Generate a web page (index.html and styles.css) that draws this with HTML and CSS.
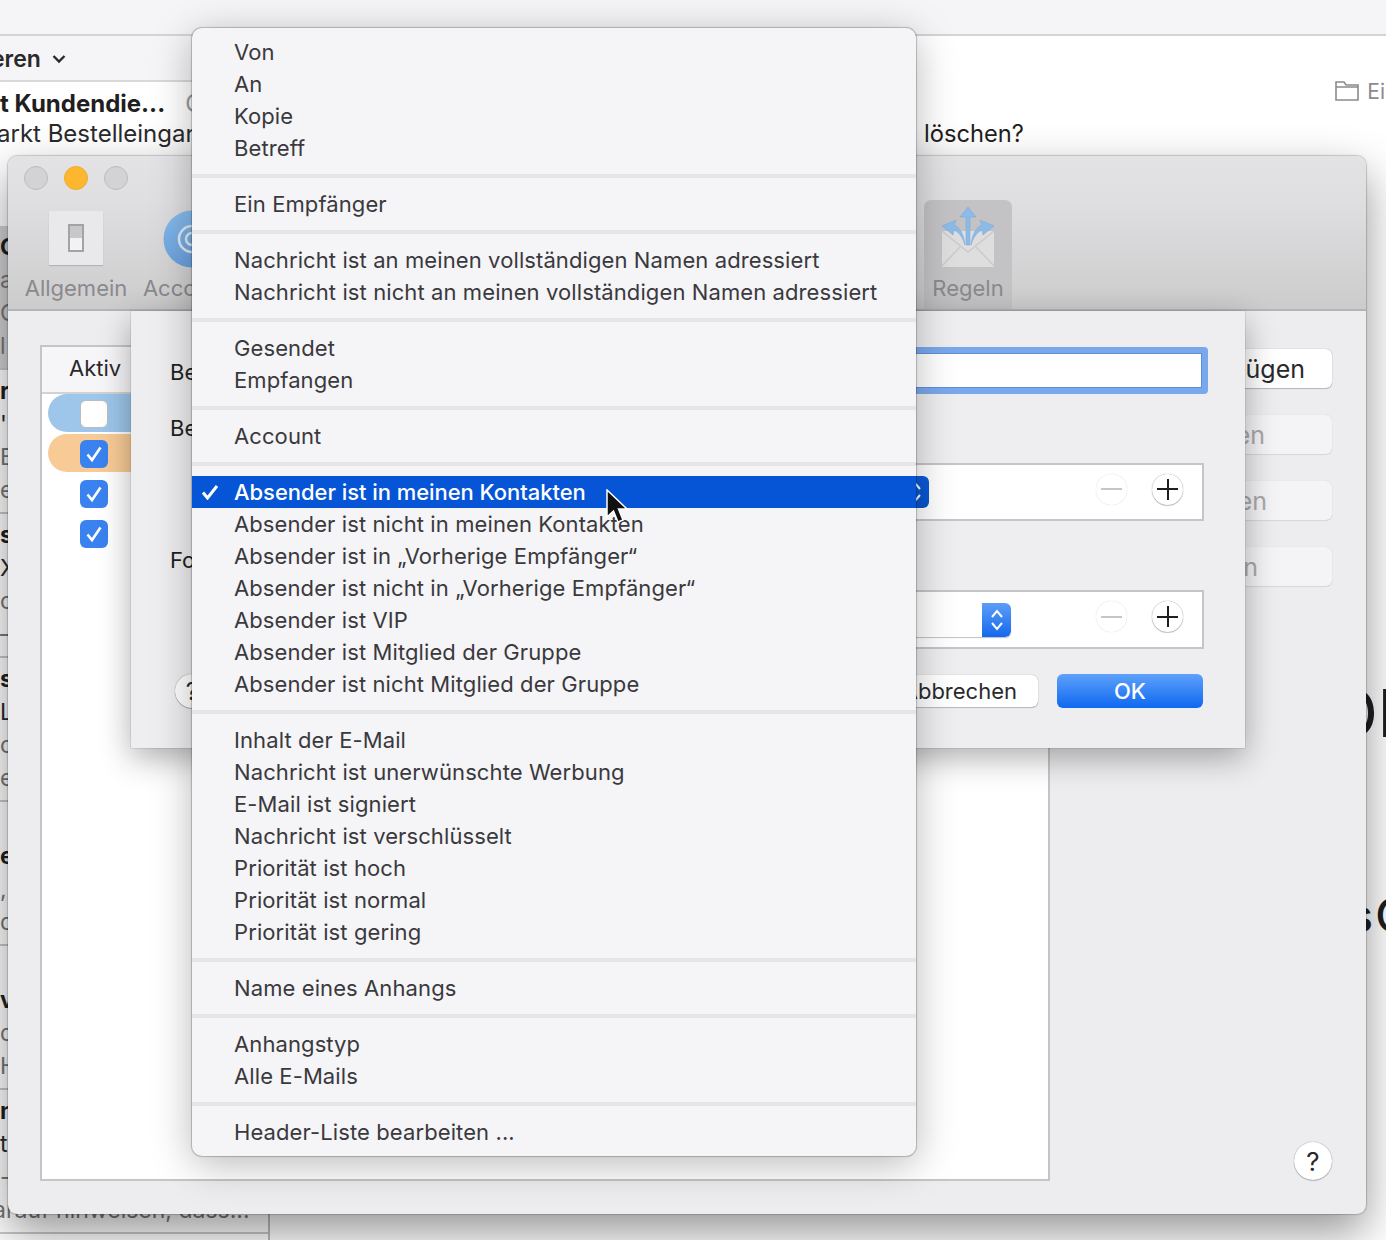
FILE: index.html
```html
<!DOCTYPE html>
<html lang="de">
<head>
<meta charset="utf-8">
<title>Mail Regeln</title>
<link rel="stylesheet" href="styles.css">
</head>
<body>
<div class="app">
  <header class="topbar"></header>
  <div class="main">
    <aside class="list">
      <div class="list-head"><span class="sort">eren</span>
        <svg class="chev" width="14" height="10" viewBox="0 0 14 10"><path d="M1.500 2 7 7.500 12.500 2" fill="none" stroke="#2a292c" stroke-width="2.400"/></svg>
      </div>
      <div class="mail selected">
        <div class="mail-top"><b>t Kundendie...</b><span class="date">G</span></div>
        <p class="dark clip">arkt Bestelleingang</p>
      </div>
      <div class="mail shaded"><b>C</b><p class="grey">a</p><p class="grey">C</p><p class="grey">l</p></div>
      <div class="mail"><b>r</b><p class="dark">'</p><p class="grey">E</p><p class="grey">e</p></div>
      <div class="mail"><b>s</b><p class="dark">X</p><p class="grey">o</p><p class="grey">–</p></div>
      <div class="mail"><b>s</b><p class="dark">L</p><p class="grey">o</p><p class="grey">e</p></div>
      <div class="mail"><b>&nbsp;</b><b>e</b><p class="grey">,</p><p class="grey">d</p></div>
      <div class="mail"><b>&nbsp;</b><b>v</b><p class="grey">d</p><p class="grey">H</p></div>
      <div class="mail"><b>n</b><p class="dark">t</p><p class="grey">-</p><p class="grey clip-more">arauf hinweisen, dass...</p></div>
    </aside>
    <section class="reader">
      <div class="folder-line">
        <svg width="24" height="20" viewBox="0 0 24 20"><path d="M1 19V1h8l2 3h12v15zM1 6h22" fill="none" stroke="#8b8a8e" stroke-width="1.600"/></svg>
        <span>Ei</span>
      </div>
      <p class="subject">löschen?</p>
      <p class="big big-one">Ol</p>
      <p class="big big-two">s C</p>
    </section>
  </div>
</div>

<div class="prefs">
  <div class="titlebar">
    <i class="light"></i><i class="light yellow"></i><i class="light"></i>
  </div>
  <nav class="tools">
    <div class="tool">
      <span class="general-icon"><span class="switch"></span></span>
      <span>Allgemein</span>
    </div>
    <div class="tool tool-acc">
      <svg class="acc-icon" width="58" height="58" viewBox="0 0 58 58"><defs><linearGradient id="acg" x1="0" y1="0" x2="0" y2="1"><stop offset="0" stop-color="#86bdec"/><stop offset="1" stop-color="#6ba0de"/></linearGradient></defs><circle cx="29" cy="29" r="28.500" fill="url(#acg)"/><circle cx="29" cy="29" r="13" fill="none" stroke="#dfe9f5" stroke-width="2.500"/><circle cx="29" cy="29" r="6" fill="none" stroke="#dfe9f5" stroke-width="2.500"/></svg>
      <span>Accounts</span>
    </div>
    <div class="tool tool-rules">
      <svg width="56" height="62" viewBox="0 0 56 62"><rect x="2" y="26" width="52" height="36" fill="#dededf"/><path d="M2 61 20 42M54 61 36 42M2 26l26 21 26-21" fill="none" stroke="#cbcacc" stroke-width="1.500"/><path d="M26 40V12h-6l8-10 8 10h-6v28zM25 40c-1-10-5-18-11-20l2-5-14 6 11 9 1-5c5 2 9 8 11 15zM31 40c1-10 5-18 11-20l-2-5 14 6-11 9-1-5c-5 2-9 8-11 15z" fill="#8dbbe8" stroke="#77a5d6" stroke-width=".500"/></svg>
      <span>Regeln</span>
    </div>
  </nav>
  <div class="pane">
    <div class="table">
      <div class="thead">Aktiv</div>
      <div class="trow pill-blue"><span class="cb"></span></div>
      <div class="trow pill-orange"><span class="cb on"><svg width="20" height="20" viewBox="0 0 20 20"><path d="M3.500 10.500 8 16 16.500 3.500" fill="none" stroke="#fff" stroke-width="2.600"/></svg></span></div>
      <div class="trow"><span class="cb on"><svg width="20" height="20" viewBox="0 0 20 20"><path d="M3.500 10.500 8 16 16.500 3.500" fill="none" stroke="#fff" stroke-width="2.600"/></svg></span></div>
      <div class="trow"><span class="cb on"><svg width="20" height="20" viewBox="0 0 20 20"><path d="M3.500 10.500 8 16 16.500 3.500" fill="none" stroke="#fff" stroke-width="2.600"/></svg></span></div>
    </div>
    <div class="side">
      <span class="btn">ügen</span>
      <span class="btn off off-a">en</span>
      <span class="btn off off-b">en</span>
      <span class="btn off off-c">n</span>
      <span class="round help">?</span>
    </div>
  </div>

  <div class="sheet">
    <div class="sheet-row">
      <label class="lbl">Be</label>
      <div class="focus"><div class="focus-inner"></div></div>
    </div>
    <label class="lbl lbl-two">Be</label>
    <div class="box">
      <div class="select sel-one"><span class="stepper dark-step"><svg width="14" height="26" viewBox="0 0 14 26"><path d="M2 10 7 4l5 6M2 16l5 6 5-6" fill="none" stroke="#fff" stroke-width="2"/></svg></span></div>
      <span class="round small minus"><i></i></span>
      <span class="round small plus"><i></i><i class="v"></i></span>
    </div>
    <label class="lbl lbl-three">Fo</label>
    <div class="box box-two">
      <div class="select sel-two"><span class="stepper"><svg width="14" height="26" viewBox="0 0 14 26"><path d="M2 10 7 4l5 6M2 16l5 6 5-6" fill="none" stroke="#fff" stroke-width="2"/></svg></span></div>
      <span class="round small minus"><i></i></span>
      <span class="round small plus"><i></i><i class="v"></i></span>
    </div>
    <div class="sheet-foot">
      <span class="round sheet-help">?</span>
      <span class="btn cancel">Abbrechen</span>
      <span class="ok">OK</span>
    </div>
  </div>
</div>

<div class="menu">
  <ul class="group"><li>Von</li><li>An</li><li>Kopie</li><li>Betreff</li></ul>
  <ul class="group"><li>Ein Empfänger</li></ul>
  <ul class="group"><li>Nachricht ist an meinen vollständigen Namen adressiert</li><li>Nachricht ist nicht an meinen vollständigen Namen adressiert</li></ul>
  <ul class="group"><li>Gesendet</li><li>Empfangen</li></ul>
  <ul class="group"><li>Account</li></ul>
  <ul class="group">
    <li class="current"><svg class="tick" width="18" height="16" viewBox="0 0 18 16"><path d="M2 8.500 6.500 14 16 2" fill="none" stroke="#fff" stroke-width="3"/></svg>Absender ist in meinen Kontakten</li>
    <li>Absender ist nicht in meinen Kontakten</li>
    <li>Absender ist in „Vorherige Empfänger“</li>
    <li>Absender ist nicht in „Vorherige Empfänger“</li>
    <li>Absender ist VIP</li>
    <li>Absender ist Mitglied der Gruppe</li>
    <li>Absender ist nicht Mitglied der Gruppe</li>
  </ul>
  <ul class="group"><li>Inhalt der E-Mail</li><li>Nachricht ist unerwünschte Werbung</li><li>E-Mail ist signiert</li><li>Nachricht ist verschlüsselt</li><li>Priorität ist hoch</li><li>Priorität ist normal</li><li>Priorität ist gering</li></ul>
  <ul class="group"><li>Name eines Anhangs</li></ul>
  <ul class="group"><li>Anhangstyp</li><li>Alle E-Mails</li></ul>
  <ul class="group"><li>Header-Liste bearbeiten ...</li></ul>
</div>

<svg class="cursor" width="24" height="38" viewBox="0 0 24 38"><path d="M2 1v27l6.500-6 4.500 11 5-2-4.500-11H22z" fill="#111" stroke="#fff" stroke-width="1.500"/></svg>
</body>
</html>
```
FILE: styles.css
```css
* { box-sizing: border-box; }
html, body { margin: 0; padding: 0; }
body {
  width: 1386px; height: 1240px; overflow: hidden; position: relative;
  font-family: Inter, "Noto Sans", "Liberation Sans", sans-serif;
  font-size: 22px; color: #2a292c; background: #fff;
}
p, ul { margin: 0; padding: 0; list-style: none; }

/* background mail app */
.app { width: 1386px; height: 1240px; display: flex; flex-direction: column; }
.topbar { height: 36px; flex: none; background: #f5f4f6; border-bottom: 2px solid #d4d3d6; }
.main { flex: 1; display: flex; min-height: 0; }
.list { width: 270px; flex: none; border-right: 2px solid #bdbcbe; overflow: hidden; }
.list-head { height: 46px; background: #f5f5f7; border-bottom: 2px solid #d9d8da; display: flex; align-items: center; gap: 11px; padding-top: 2px; }
.sort { font-weight: 600; font-size: 23px; margin-left: -9px; }
.mail { height: 144px; padding-top: 5px; border-bottom: 2px solid #c9c8ca; white-space: nowrap; }
.mail b, .mail p { display: block; height: 33px; line-height: 33px; font-size: 23px; }
.mail b { font-weight: 700; color: #1f1e21; }
.mail-top { display: flex; gap: 20px; font-size: 24px; height: 32px; }
.mail.selected b { font-size: 24px; line-height: 33px; }
.mail.selected p { font-size: 24px; line-height: 30px; height: 30px; }
.date { color: #9a999c; line-height: 33px; }
.mail.selected { background: #fff; height: 144px; padding-top: 5px; border-bottom: none; }
.mail.shaded { background: #d2d1d3; }
.dark { color: #2a292c; }
.grey { color: #77767a; }
.clip { text-indent: -3px; }
.clip-more { text-indent: -7px; }
.reader { flex: 1; min-width: 0; overflow: hidden; padding-top: 43px; }
.folder-line { display: flex; align-items: center; justify-content: flex-end; gap: 8px; height: 24px; margin-right: 1px; color: #8b8a8e; font-size: 21px; }
.folder-line svg { flex: none; }
.subject { margin-left: 654px; margin-top: 16px; height: 30px; line-height: 30px; font-size: 23.700px; color: #1f1e21; }
.big { font-size: 66px; line-height: 80px; height: 80px; white-space: nowrap; text-align: right; color: #1f1e21; }
.big-one { margin-top: 524px; margin-right: -8px; }
.big-two { margin-top: 122px; margin-right: -23px; font-size: 46px; font-weight: 500; word-spacing: -10px; }

/* preferences window */
.prefs {
  position: absolute; left: 8px; top: 156px; width: 1358px; height: 1058px;
  background: #edecee; border-radius: 9px; overflow: visible;
  box-shadow: 0 0 1px 1px rgba(0,0,0,.18), 0 18px 45px rgba(0,0,0,.42);
  display: flex; flex-direction: column;
}
.titlebar {
  height: 44px; flex: none; padding: 10px 16px 0; display: flex; gap: 16px;
  background: linear-gradient(#e3e2e4, #dfdee0); border-radius: 9px 9px 0 0;
}
.light { width: 24px; height: 24px; border-radius: 50%; background: #d3d2d4; border: 1px solid #bcbbbd; display: block; }
.light.yellow { background: #fdb72e; border-color: #f0ad2a; }
.tools {
  height: 111px; flex: none; display: flex; padding-left: 8px; padding-right: 354px;
  background: linear-gradient(#dfdee0, #cdcccd); border-bottom: 2px solid #b5b4b6;
  color: #8a898c; font-size: 22px;
}
.tool { display: flex; flex-direction: column; align-items: center; width: 120px; line-height: 28px; }
.general-icon { width: 54px; height: 54px; margin-top: 11px; margin-bottom: 9px; background: #e9e8ea; display: flex; align-items: center; justify-content: center; box-shadow: 0 1px 1px rgba(0,0,0,.15); }
.switch { width: 16px; height: 28px; border: 2px solid #a3a2a5; background: linear-gradient(#c8c7c9 50%, #f2f2f3 50%); }
.acc-icon { margin-top: 10px; margin-bottom: 6px; flex: none; }
.tool-acc { padding-right: 8px; }
.tool-rules { margin-left: auto; width: 88px; padding: 5px 0 0; background: #c3c2c4; border-radius: 7px 7px 0 0; }
.tool-rules svg { margin-bottom: 7px; flex: none; }
.pane { flex: 1; display: flex; gap: 10px; padding: 34px 34px 33px 32px; min-height: 0; }
.table { width: 1010px; flex: none; background: #fff; border: 2px solid #c5c4c6; }
.thead { height: 47px; background: #f6f6f8; border-bottom: 2px solid #d2d1d3; padding-left: 27px; line-height: 42px; font-size: 22px; }
.trow { height: 38px; margin: 0 8px 2px 6px; display: flex; align-items: center; padding: 2px 0 0 32px; border-radius: 19px 0 0 19px; }
.pill-blue { background: #9dc6ea; }
.pill-orange { background: #f8cb96; }
.cb { width: 28px; height: 28px; border-radius: 6px; display: flex; align-items: center; justify-content: center; background: #fff; border: 1px solid #bcbbbe; }
.cb.on { background: #3a82f0; border: none; }
.side { flex: 1; display: flex; flex-direction: column; gap: 27px; padding-top: 4px; align-items: stretch; }
.btn {
  height: 39px; background: #fff; border-radius: 6px; line-height: 40px; text-align: right;
  padding-right: 27px; font-size: 25px; color: #2a292c;
  box-shadow: 0 0 1px rgba(0,0,0,.4), 0 1px 1px rgba(0,0,0,.2);
}
.off { background: #f4f3f5; color: #a9a8ab; box-shadow: 0 0 1px rgba(0,0,0,.18), 0 1px 1px rgba(0,0,0,.08); }
.off-a { padding-right: 67px; }
.off-b { padding-right: 65px; }
.off-c { padding-right: 74px; }
.round {
  display: flex; align-items: center; justify-content: center; border-radius: 50%;
  background: #fff; box-shadow: 0 0 1px rgba(0,0,0,.5), 0 1px 1px rgba(0,0,0,.2);
}
.help { width: 38px; height: 38px; margin-top: auto; align-self: flex-end; font-size: 26px; position: relative; top: -1px; }

/* rule sheet */
.sheet {
  position: absolute; left: 123px; top: 155px; width: 1114px; height: 437px;
  background: #eeedef; padding: 36px 42px 0 39px; display: flex; flex-direction: column;
  box-shadow: 0 0 1px rgba(0,0,0,.45), 0 10px 30px rgba(0,0,0,.32);
}
.lbl { display: block; line-height: 24px; height: 24px; font-size: 22px; color: #1f1e21; }
.sheet-row { height: 47px; display: flex; align-items: center; flex: none; }
.sheet-row .lbl { margin-top: 2px; }
.focus { flex: 1; height: 47px; margin-left: 100px; margin-right: -5px; background: #7aa8ec; border-radius: 4px; padding: 6px; }
.focus-inner { height: 100%; background: #fff; border: 1px solid #5f8ed6; }
.lbl-two { margin-top: 22px; }
.box {
  height: 58px; margin-top: 23px; margin-left: 30px; flex: none; margin-right: -1px;
  background: #fff; border: 2px solid #c5c4c6; display: flex; align-items: center;
  padding: 0 19px 6px 0; gap: 25px;
}
.box-two { height: 59px; margin-top: 18px; }
.lbl-three { margin-top: 27px; }
.select { height: 32px; flex: none; display: flex; justify-content: flex-end; background: #fff; margin-top: 6px; }
.sel-one { width: 727px; }
.sel-two { width: 809px; height: 34px; box-shadow: 0 1px 1px rgba(0,0,0,.25); border-radius: 5px; }
.stepper { width: 29px; height: 100%; border-radius: 0 6px 6px 0; background: linear-gradient(#5d9df7, #1469ee); display: flex; align-items: center; justify-content: center; }
.dark-step { background: linear-gradient(#0a5cdc, #0555cc); }
.round.small { width: 31px; height: 31px; flex: none; position: relative; }
.sel-one + .minus, .sel-two + .minus { margin-left: auto; }
.small i { position: absolute; left: 5px; right: 5px; top: 14.500px; height: 2px; background: #1f1e21; }
.small i.v { left: 14.500px; right: auto; width: 2px; height: auto; top: 5px; bottom: 5px; }
.minus { box-shadow: 0 0 1px rgba(0,0,0,.22); }
.minus i { background: #c6c5c7; }
.sheet-foot { margin-top: 25px; height: 34px; display: flex; align-items: center; flex: none; }
.sheet-help { width: 34px; height: 34px; margin-left: 5px; font-size: 24px; }
.cancel { margin-left: auto; width: 140px; height: 32px; line-height: 32px; padding: 0 21px 0 0; text-align: right; font-size: 22px; }
.ok { width: 146px; height: 34px; margin-left: 19px; border-radius: 6px; background: linear-gradient(#5fa1fb, #0e68f1); color: #fff; text-align: center; line-height: 34px; font-size: 22px; font-weight: 500; }

/* popup menu */
.menu {
  position: absolute; left: 192px; top: 28px; width: 724px; height: 1128px;
  background: #f5f4f7; border-radius: 10px; padding: 8px 0;
  box-shadow: 0 0 1px 1px rgba(0,0,0,.22), 0 8px 40px rgba(0,0,0,.28);
  color: #3a393d; letter-spacing: .1px;
}
.group + .group { margin-top: 10px; padding-top: 14px; position: relative; }
.group + .group::before { content: ""; position: absolute; left: 0; right: 0; top: 0; height: 4px; background: #e5e4e6; }
.group li { height: 32px; line-height: 32px; padding-left: 42px; white-space: nowrap; }
.group li.current { background: #0555d6; color: #fff; padding-left: 9px; display: flex; align-items: center; font-weight: 500; letter-spacing: -.05px; }
.tick { margin-right: 15px; flex: none; }
.cursor { position: absolute; left: 605px; top: 489px; }
```
